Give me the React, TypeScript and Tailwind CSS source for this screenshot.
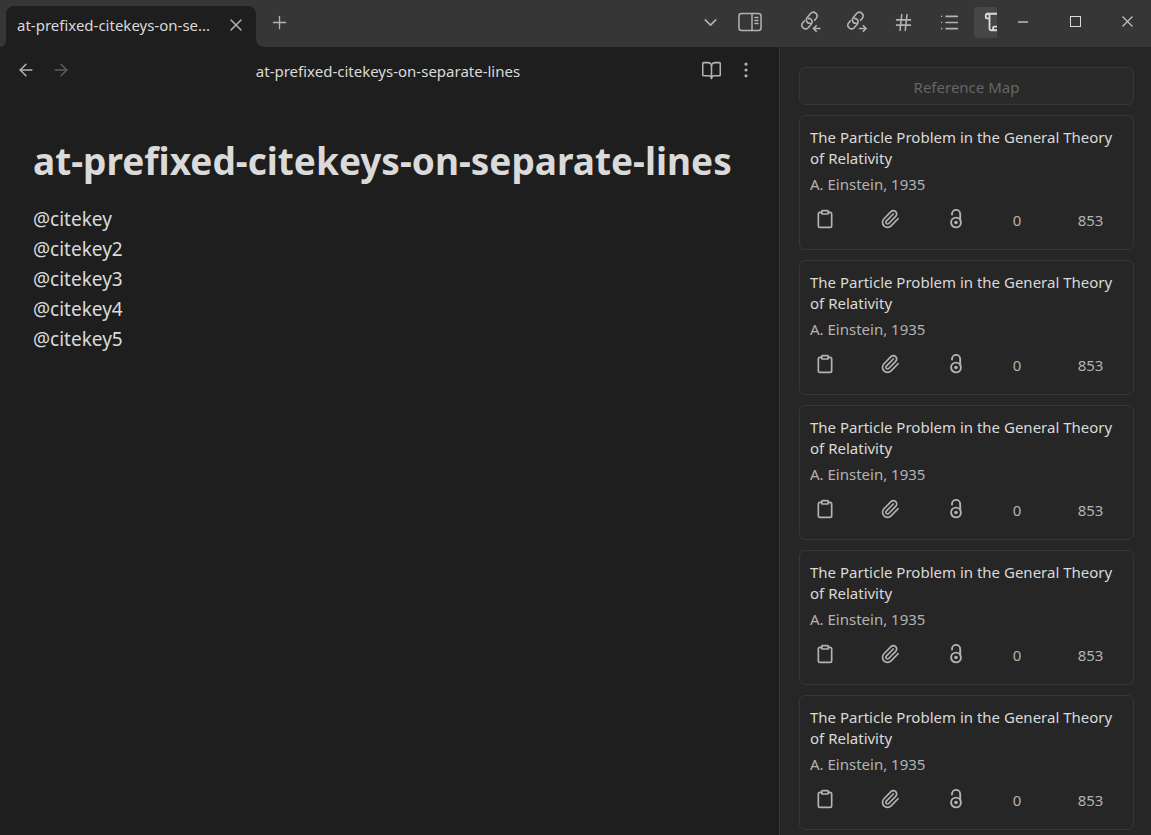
import React from "react";
import {
  ArrowLeft,
  ArrowRight,
  BookOpen,
  ChevronDown,
  Clipboard,
  Hash,
  List,
  MoreVertical,
  Paperclip,
  Plus,
  Scroll,
  X,
} from "lucide-react";

const NOTE_NAME = "at-prefixed-citekeys-on-separate-lines";
const TAB_LABEL = `${NOTE_NAME.slice(0, 26)}...`;
const CITEKEYS = ["@citekey", "@citekey2", "@citekey3", "@citekey4", "@citekey5"];

const REFERENCES = [1, 2, 3, 4, 5].map((id) => ({
  id,
  title: "The Particle Problem in the General Theory of Relativity",
  byline: "A. Einstein, 1935",
  references: 0,
  citations: 853,
}));

function LinkArrowIcon({ direction }: { direction: "in" | "out" }) {
  return (
    <svg width="22" height="22" viewBox="1 0.5 22 22" fill="none" stroke="currentColor" strokeWidth="1.6" strokeLinecap="round" strokeLinejoin="round">
      <path d="M11.3 12.7c-1.8.2-3.6-1-3.9-2.900-.2-1.100.2-2.200 1-3l3.200-3.800a3.700 3.700 0 0 1 5.700 4.700l-1.700 2.100" />
      <path d="M9.300 7.900c1.800-.2 3.600 1.100 3.800 3 .1 1.100-.2 2.100-.9 2.900l-3 3.400a3.700 3.700 0 0 1-5.600-4.800l1.700-2" />
      {direction === "in" ? (
        <path d="M21 18h-6.500M17.200 15.200l-2.800 2.800 2.800 2.800" />
      ) : (
        <path d="M14.500 18h6.500M18.300 15.200l2.800 2.800-2.800 2.800" />
      )}
    </svg>
  );
}

function SidebarIcon() {
  return (
    <svg width="24" height="20" viewBox="0 0 24 20" fill="none" stroke="currentColor" strokeWidth="1.5" strokeLinecap="round">
      <rect x="1" y="1.500" width="22" height="17" rx="2.500" />
      <path d="M14 1.500v17" />
      <path d="M17 5.500h3M17 8.500h3M17 11.500h3" />
    </svg>
  );
}

function OpenAccessIcon() {
  return (
    <svg width="14" height="20" viewBox="0 0 14 20" fill="none" stroke="currentColor" strokeWidth="1.9" strokeLinecap="round">
      <circle cx="7" cy="13.500" r="4.900" />
      <circle cx="7" cy="13.500" r="1.800" fill="currentColor" stroke="none" />
      <path d="M3 5.500V5a4.100 4.100 0 0 1 8.200 0v6" />
    </svg>
  );
}

function TitleBar() {
  return (
    <header className="flex h-[47px] shrink-0 bg-[#363636] text-[#b3b3b3]">
      <div className="flex min-w-0 flex-1 items-end">
        <div className="h-2 w-1.5 shrink-0 bg-[#1e1e1e]">
          <div className="h-2 rounded-br-lg bg-[#363636]" />
        </div>
        <div className="flex h-[41px] w-[250px] shrink-0 items-center rounded-t-lg bg-[#1e1e1e] pr-2.5 pl-[11px] text-[#dadada]">
          <span title={NOTE_NAME} className="min-w-0 flex-1 pb-0.5 text-[15px] whitespace-nowrap">
            {TAB_LABEL}
          </span>
          <button aria-label="Close tab" className="ml-2 pb-1 text-[#b3b3b3]">
            <X size={20} strokeWidth={1.75} />
          </button>
        </div>
        <div className="h-2 w-2 shrink-0 bg-[#1e1e1e]">
          <div className="h-2 rounded-bl-lg bg-[#363636]" />
        </div>
        <button aria-label="New tab" className="ml-[5px] flex h-[47px] items-center pb-0.5">
          <Plus size={21} strokeWidth={1.5} />
        </button>
      </div>
      <div className="flex items-center gap-[17px] pr-7 pb-[3px]">
        <button aria-label="Tab list">
          <ChevronDown size={21} strokeWidth={1.75} />
        </button>
        <button aria-label="Toggle right sidebar">
          <SidebarIcon />
        </button>
      </div>
      <nav aria-label="Sidebar views" className="flex w-[207px] shrink-0 items-center gap-1 overflow-hidden pb-[3px]">
        <button aria-label="Backlinks" className="flex w-[42px] shrink-0 justify-center">
          <LinkArrowIcon direction="in" />
        </button>
        <button aria-label="Outgoing links" className="flex w-[42px] shrink-0 justify-center">
          <LinkArrowIcon direction="out" />
        </button>
        <button aria-label="Tags" className="flex w-[42px] shrink-0 justify-center">
          <Hash size={21} strokeWidth={1.75} />
        </button>
        <button aria-label="Outline" className="flex w-[42px] shrink-0 justify-center">
          <List size={21} strokeWidth={1.75} />
        </button>
        <button aria-label="References" className="flex h-[31px] w-[42px] shrink-0 items-center justify-center rounded bg-[#464646] text-[#dadada]">
          <Scroll size={22} strokeWidth={2} />
        </button>
      </nav>
      <div className="flex w-[154px] shrink-0 pb-1">
        <button aria-label="Minimize" className="flex w-[52px] items-center justify-center">
          <span className="h-0.5 w-2.5 bg-[#9a9a9a]" />
        </button>
        <button aria-label="Maximize" className="flex w-[52px] items-center justify-center">
          <span className="size-[11px] border border-[#dadada]" />
        </button>
        <button aria-label="Close window" className="flex flex-1 items-center justify-center pl-0.5 text-[#c8c8c8]">
          <svg width="11" height="11" viewBox="0 0 11 11" stroke="currentColor" strokeWidth="1.1">
            <path d="M.5.500l10 10M10.500.500l-10 10" />
          </svg>
        </button>
      </div>
    </header>
  );
}

function NoteView() {
  return (
    <main className="min-w-0 flex-1 bg-[#1e1e1e] text-[#dadada]">
      <div className="flex h-[46px] items-center px-4">
        <div className="flex flex-1 items-center gap-[15px] pr-1 text-[#b3b3b3]">
          <button aria-label="Back">
            <ArrowLeft size={20} strokeWidth={1.75} />
          </button>
          <button aria-label="Forward" className="text-[#5c5c5c]">
            <ArrowRight size={20} strokeWidth={1.75} />
          </button>
        </div>
        <span className="pt-0.5 text-[15px]">{NOTE_NAME}</span>
        <div className="flex flex-1 items-center justify-end gap-[14px] pr-[7px] text-[#b3b3b3]">
          <button aria-label="Reading view">
            <BookOpen size={21} strokeWidth={1.75} />
          </button>
          <button aria-label="More options">
            <MoreVertical size={20} strokeWidth={1.75} />
          </button>
        </div>
      </div>
      <article className="px-[33px] pt-[44px]">
        <h1 className="text-[37px] leading-[48px] font-bold whitespace-nowrap">{NOTE_NAME}</h1>
        <div className="mt-[19px] text-[19px] leading-[30px]">
          {CITEKEYS.map((key) => (
            <p key={key}>{key}</p>
          ))}
        </div>
      </article>
    </main>
  );
}

function ReferenceCard({ item }: { item: (typeof REFERENCES)[number] }) {
  return (
    <li className="rounded-md border border-[#363636] px-2.5 pt-[11px] pb-5 text-[15px] leading-[21px]">
      <h2 className="text-[#dadada]">{item.title}</h2>
      <p className="mt-[5px] text-[#b3b3b3]">{item.byline}</p>
      <div className="mt-[13px] flex h-[21px] items-center gap-[35px] text-[#b3b3b3]">
        <button aria-label="Copy" className="flex w-[30px] justify-center">
          <Clipboard size={20} strokeWidth={2} />
        </button>
        <button aria-label="Attachment" className="flex w-[30px] justify-center">
          <Paperclip size={20} strokeWidth={2} />
        </button>
        <button aria-label="Open access" className="flex w-8 justify-center">
          <OpenAccessIcon />
        </button>
        <span className="w-5 pt-[3px] text-center">{item.references}</span>
        <span className="w-[57px] pt-[3px] text-center">{item.citations}</span>
      </div>
    </li>
  );
}

export default function App() {
  return (
    <div className="flex h-screen flex-col overflow-hidden bg-[#1e1e1e] font-['Noto_Sans','Open_Sans',sans-serif]">
      <TitleBar />
      <div className="flex min-h-0 flex-1">
        <NoteView />
        <aside className="w-[372px] shrink-0 overflow-hidden border-l border-[#363636] bg-[#262626] pt-5 pr-[17px] pl-[19px]">
          <button className="h-[38px] w-full rounded-md border border-[#363636] bg-[#2a2a2a] pt-0.5 text-[15px] text-[#666666]">
            Reference Map
          </button>
          <ul className="mt-2.5 flex flex-col gap-2.5">
            {REFERENCES.map((item) => (
              <ReferenceCard key={item.id} item={item} />
            ))}
          </ul>
        </aside>
      </div>
    </div>
  );
}
